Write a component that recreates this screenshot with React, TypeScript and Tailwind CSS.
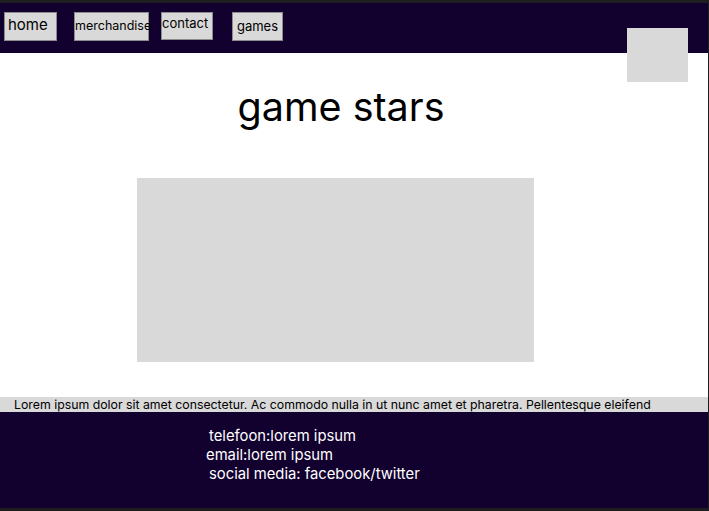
export default function App() {
  const font = { fontFamily: "Inter, 'Noto Sans', sans-serif" }
  return (
    <div className="relative w-[709px] h-[511px] bg-[#1e1e1e] pt-[3px] pr-px pb-[3px] flex flex-col" style={font}>
      {/* Header */}
      <div className="h-[50px] bg-[#12002f] flex items-start pt-[9px] shrink-0">
        <button className="ml-[4px] w-[53px] h-[29px] bg-[#d9d9d9] border border-[#8c8c8c] text-[15px] leading-none text-black text-left pl-[3px] pt-[4px] self-start flex">
          home
        </button>
        <button className="ml-[17px] w-[75px] h-[29px] bg-[#d9d9d9] border border-[#8c8c8c] text-[12.5px] leading-none text-black flex items-center justify-start pl-0">
          merchandise
        </button>
        <button className="ml-[12px] w-[52px] h-[28px] bg-[#d9d9d9] border border-[#8c8c8c] text-[13px] leading-none text-black flex items-start pt-[4px] pl-0">
          contact
        </button>
        <button className="ml-[19px] w-[51px] h-[29px] bg-[#d9d9d9] border border-[#8c8c8c] text-[13px] leading-none text-black flex items-center justify-center">
          games
        </button>
      </div>

      {/* Main */}
      <div className="flex-1 bg-white flex flex-col">
        <h1 className="text-center text-[39.5px] leading-none text-black mt-[35px] pr-[26px]">game stars</h1>
        <div className="ml-[137px] mt-[50px] w-[397px] h-[184px] bg-[#d9d9d9]" />
      </div>

      {/* Lorem strip */}
      <div className="h-[15px] bg-[#d9d9d9] text-[12.3px] leading-[15px] text-black pl-[14px] whitespace-nowrap overflow-hidden">
        Lorem ipsum dolor sit amet consectetur. Ac commodo nulla in ut nunc amet et pharetra. Pellentesque eleifend
      </div>

      {/* Footer */}
      <div className="h-[96px] bg-[#12002f] text-white text-[14.8px] leading-[19px] pt-[15px] flex flex-col">
        <p className="pl-[209px]">telefoon:lorem ipsum</p>
        <p className="pl-[206px]">email:lorem ipsum</p>
        <p className="pl-[209px]">social media: facebook/twitter</p>
      </div>

      {/* Overlapping placeholder */}
      <div className="absolute left-[627px] top-[28px] w-[61px] h-[54px] bg-[#d9d9d9]" />
    </div>
  )
}
